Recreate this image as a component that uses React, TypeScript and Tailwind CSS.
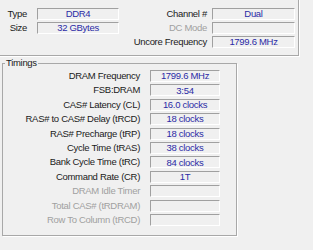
import React from "react";

const timings: { label: string; value: string; off?: boolean }[] = [
  { label: "DRAM Frequency", value: "1799.6 MHz" },
  { label: "FSB:DRAM", value: "3:54" },
  { label: "CAS# Latency (CL)", value: "16.0 clocks" },
  { label: "RAS# to CAS# Delay (tRCD)", value: "18 clocks" },
  { label: "RAS# Precharge (tRP)", value: "18 clocks" },
  { label: "Cycle Time (tRAS)", value: "38 clocks" },
  { label: "Bank Cycle Time (tRC)", value: "84 clocks" },
  { label: "Command Rate (CR)", value: "1T" },
  { label: "DRAM Idle Timer", value: "", off: true },
  { label: "Total CAS# (tRDRAM)", value: "", off: true },
  { label: "Row To Column (tRCD)", value: "", off: true },
];

function Field({ value, w }: { value: string; w: string }) {
  return (
    <div
      className={`${w} h-[12px] border-t border-l border-[#a0a0a0] border-r border-b border-r-white border-b-white flex items-center justify-center text-[#2b2ba6] leading-none`}
    >
      {value}
    </div>
  );
}

function Row({ label, value, off, w }: { label: string; value: string; off?: boolean; w: string }) {
  return (
    <div className="flex items-center justify-end h-[12px]">
      <span className={`whitespace-nowrap ${off ? "text-[#a0a0a0]" : ""}`}>{label}</span>
      <div className="ml-[5px]">
        <Field value={value} w={w} />
      </div>
    </div>
  );
}

export default function App() {
  return (
    <div
      className="w-[313px] h-[250px] bg-[#f0f0f0] overflow-hidden text-[9.5px] tracking-[-0.3px] leading-[14px] text-[#1a1a1a]"
      style={{ fontFamily: '"Liberation Sans", Arial, sans-serif' }}
    >
      {/* General */}
      <fieldset className="ml-[-4px] mt-[-10px] w-[303px] border border-[#a8a8a8] shadow-[1px_1px_0_#fff] px-0 pt-[4px] pb-[7px]">
        <legend className="ml-[2px] px-[1px] leading-[14px]">General</legend>
        <div className="flex">
          <div className="flex flex-col gap-[2px] w-[122px] items-end">
            <div className="flex items-center h-[12px]">
              <span>Type</span>
              <div className="ml-[10px]">
                <Field value="DDR4" w="w-[82px]" />
              </div>
            </div>
            <div className="flex items-center h-[12px]">
              <span>Size</span>
              <div className="ml-[10px]">
                <Field value="32 GBytes" w="w-[82px]" />
              </div>
            </div>
          </div>
          <div className="flex flex-col gap-[2px] ml-auto mr-[3px]">
            <Row label="Channel #" value="Dual" w="w-[83px]" />
            <Row label="DC Mode" value="" off w="w-[83px]" />
            <Row label="Uncore Frequency" value="1799.6 MHz" w="w-[83px]" />
          </div>
        </div>
      </fieldset>

      {/* Timings */}
      <fieldset className="ml-[2px] w-[235px] border border-[#a8a8a8] shadow-[1px_1px_0_#fff] px-0 pt-0 pb-[9px]">
        <legend className="ml-[2px] px-[1px] leading-[14px]">Timings</legend>
        <div className="flex flex-col gap-[2.4px] w-[217px]">
          {timings.map((t) => (
            <div key={t.label} className="flex items-center justify-end h-[12px]">
              <span className={`whitespace-nowrap ${t.off ? "text-[#a0a0a0]" : ""}`}>{t.label}</span>
              <div className="ml-[10px]">
                <Field value={t.value} w="w-[70px]" />
              </div>
            </div>
          ))}
        </div>
      </fieldset>
    </div>
  );
}
